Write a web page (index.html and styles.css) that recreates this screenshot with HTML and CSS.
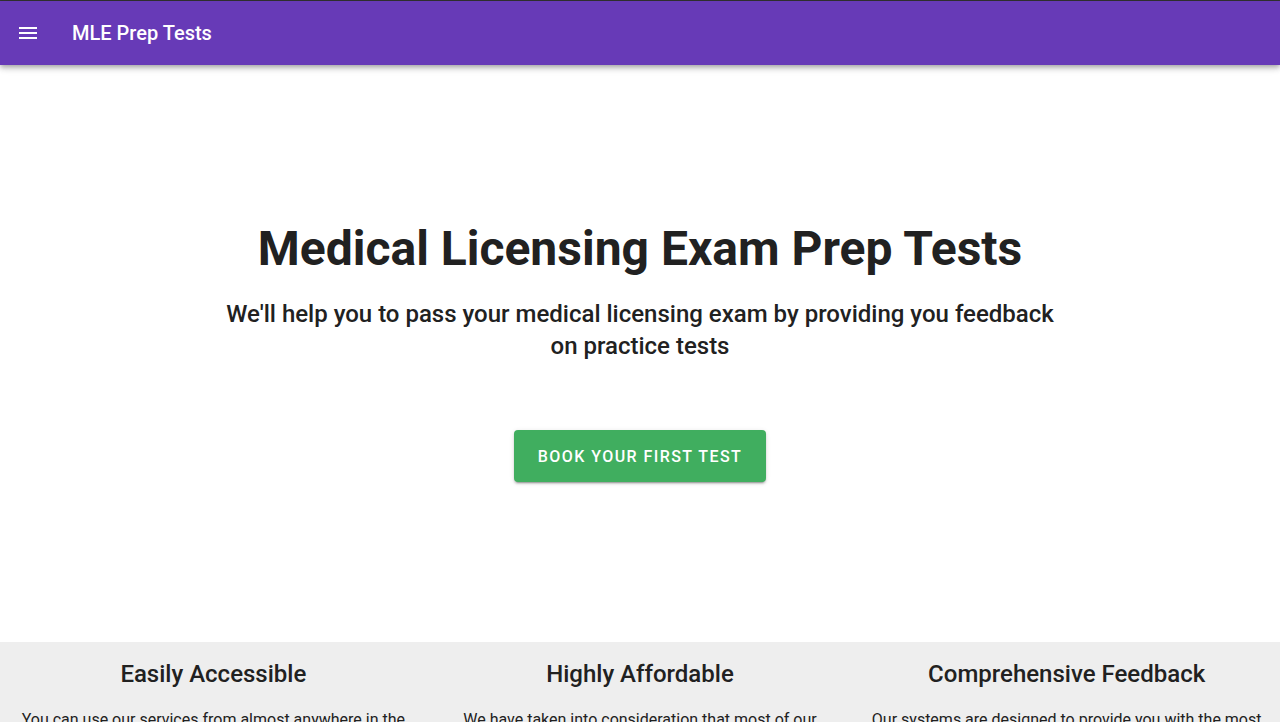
FILE: index.html
```html
<!DOCTYPE html>
<html lang="en">
<head>
<meta charset="utf-8">
<title>MLE Prep Tests</title>
<link rel="stylesheet" href="styles.css">
</head>
<body>
<div class="app">
  <header class="toolbar">
    <button class="nav-btn" aria-label="Menu">
      <svg width="24" height="24" viewBox="0 0 24 24"><path fill="#fff" d="M3 18h18v-2H3v2zm0-5h18v-2H3v2zm0-7v2h18V6H3z"/></svg>
    </button>
    <div class="title">MLE Prep Tests</div>
  </header>
  <main>
    <section class="hero">
      <h1 class="hero-title">Medical Licensing Exam Prep Tests</h1>
      <p class="hero-sub">We'll help you to pass your medical licensing exam by providing you feedback on practice tests</p>
      <a class="cta" href="#">Book your first test</a>
    </section>
    <section class="features">
      <div class="feature">
        <h2>Easily Accessible</h2>
        <p>You can use our services from almost anywhere in the world, at any time that is convenient for you.</p>
      </div>
      <div class="feature">
        <h2>Highly Affordable</h2>
        <p>We have taken into consideration that most of our users are students, so our prices are kept low.</p>
      </div>
      <div class="feature">
        <h2>Comprehensive Feedback</h2>
        <p>Our systems are designed to provide you with the most detailed feedback on every practice test.</p>
      </div>
    </section>
  </main>
</div>
</body>
</html>
```

FILE: styles.css
```css
* { box-sizing: border-box; }
html, body { margin: 0; padding: 0; }
body {
  font-family: Roboto, "Noto Sans", Arial, sans-serif;
  color: rgba(0,0,0,0.87);
  background: #fff;
  overflow: hidden;
}
.app {
  border-top: 1px solid #333;
}
.toolbar {
  height: 64px;
  background: #673ab7;
  display: flex;
  align-items: center;
  padding: 0 16px;
  box-shadow: 0 2px 4px -1px rgba(0,0,0,.2), 0 4px 5px 0 rgba(0,0,0,.14), 0 1px 10px 0 rgba(0,0,0,.12);
  position: relative;
  z-index: 2;
}
.nav-btn {
  width: 24px;
  height: 24px;
  padding: 0;
  border: 0;
  background: none;
  display: flex;
}
.title {
  margin-left: 32px;
  color: #fff;
  font-size: 20px;
  font-weight: 500;
}
.hero {
  height: 577px;
  display: flex;
  flex-direction: column;
  align-items: center;
  justify-content: center;
  text-align: center;
  padding-bottom: 4px;
}
.hero-title {
  margin: 0;
  font-size: 48px;
  font-weight: 700;
  line-height: 56px;
  color: #212121;
}
.hero-sub {
  margin: 21px 0 0;
  max-width: 850px;
  font-size: 24px;
  font-weight: 500;
  line-height: 32px;
  color: #212121;
}
.cta {
  margin-top: 68px;
  height: 52px;
  padding: 0 24px;
  display: inline-flex;
  align-items: center;
  background: #40ae5f;
  color: #fff;
  text-decoration: none;
  text-transform: uppercase;
  font-size: 16px;
  font-weight: 500;
  letter-spacing: 0.09em;
  border-radius: 4px;
  box-shadow: 0 3px 1px -2px rgba(0,0,0,.2), 0 2px 2px 0 rgba(0,0,0,.14), 0 1px 5px 0 rgba(0,0,0,.12);
}
.features {
  background: #eeeeee;
  display: grid;
  grid-template-columns: repeat(3, 1fr);
  padding-top: 12px;
}
.feature {
  padding: 0 16px;
  text-align: center;
}
.feature h2 {
  margin: 0;
  font-size: 24px;
  font-weight: 500;
  line-height: 40px;
  color: #212121;
}
.feature p {
  margin: 14px 0 0;
  font-size: 16px;
  line-height: 24px;
  color: #212121;
}
```
